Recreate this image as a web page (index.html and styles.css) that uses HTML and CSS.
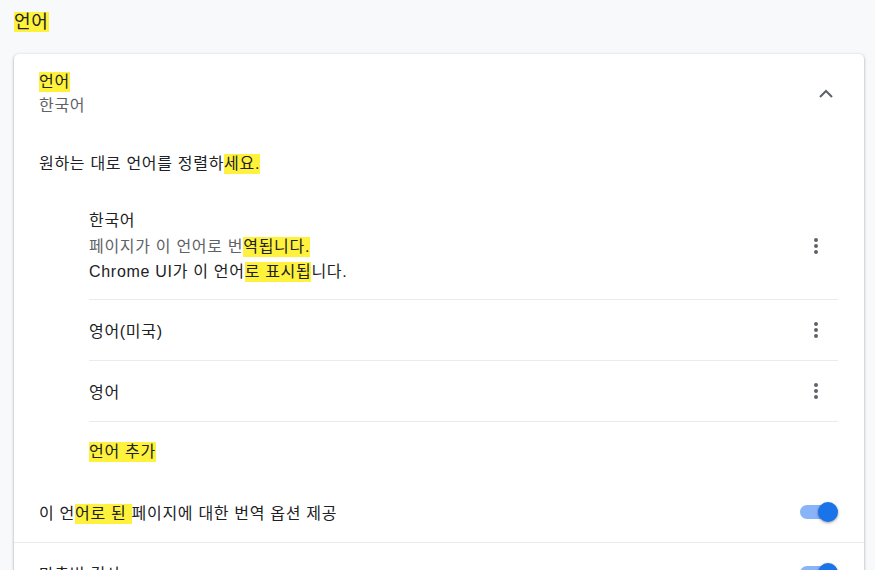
FILE: index.html
```html
<!DOCTYPE html>
<html lang="ko">
<head>
<meta charset="UTF-8">
<title>언어</title>
<link rel="stylesheet" href="styles.css">
</head>
<body>
<div class="page">
    <h2 class="page-title"><mark>언어</mark></h2>
    <div class="card">
        <div class="card-head">
            <div class="head-text">
                <div class="head-label"><mark>언어</mark></div>
                <div class="head-sub">한국어</div>
            </div>
            <svg class="chevron" width="24" height="24" viewBox="0 0 24 24"><path d="M6 15l6-6 6 6" fill="none" stroke="#5f6368" stroke-width="2"/></svg>
        </div>
        <div class="card-desc">원하는 대로 언어를 정렬하<mark>세요.</mark></div>
        <div class="lang-list">
            <div class="lang-row first">
                <div class="lang-text">
                    <div>한국어</div>
                    <div class="sub">페이지가 이 언어로 번<mark>역됩니다.</mark></div>
                    <div>Chrome UI가 이 언어<mark>로 표시됩</mark>니다.</div>
                </div>
                <svg class="kebab" width="20" height="20" viewBox="0 0 20 20"><circle cx="10" cy="4" r="2"/><circle cx="10" cy="10" r="2"/><circle cx="10" cy="16" r="2"/></svg>
            </div>
            <div class="lang-row">
                <div class="lang-text">영어(미국)</div>
                <svg class="kebab" width="20" height="20" viewBox="0 0 20 20"><circle cx="10" cy="4" r="2"/><circle cx="10" cy="10" r="2"/><circle cx="10" cy="16" r="2"/></svg>
            </div>
            <div class="lang-row">
                <div class="lang-text">영어</div>
                <svg class="kebab" width="20" height="20" viewBox="0 0 20 20"><circle cx="10" cy="4" r="2"/><circle cx="10" cy="10" r="2"/><circle cx="10" cy="16" r="2"/></svg>
            </div>
            <div class="lang-row add">
                <div class="lang-text"><mark>언어 추가</mark></div>
            </div>
        </div>
        <div class="toggle-row">
            <div>이 언<mark>어로 된&nbsp;</mark>페이지에 대한 번역 옵션 제공</div>
            <span class="toggle"><span class="knob"></span></span>
        </div>
        <div class="toggle-row border">
            <div>맞춤법 검사</div>
            <span class="toggle"><span class="knob"></span></span>
        </div>
    </div>
</div>
</body>
</html>
```

FILE: styles.css
```css
body {
    margin: 0;
    background: #f8f9fa;
    font-family: "Liberation Sans", "Noto Sans CJK KR", sans-serif;
    font-size: 16px;
    letter-spacing: 0.7px;
    color: #202124;
    overflow: hidden;
}
.page {
    padding: 0 11px 0 14px;
}
mark {
    background: #fff23c;
    color: #202124;
    display: inline-block;
    line-height: 20px;
    white-space: pre;
}
.page-title {
    margin: 0;
    padding: 10px 0 20px 0;
    font-size: 18px;
    font-weight: normal;
    line-height: 24px;
}
.card {
    background: #fff;
    border-radius: 5px;
    box-shadow: 0 1px 2px rgba(60,64,67,0.3), 0 1px 3px 1px rgba(60,64,67,0.15);
    height: 600px;
}
.card-head {
    display: flex;
    align-items: center;
    height: 80px;
    padding: 0 26px 0 25px;
}
.head-text {
    flex: 1;
    line-height: 24px;
}
.head-sub { color: #5f6368; }
.card-desc {
    height: 60px;
    line-height: 60px;
    padding: 0 25px;
}
.lang-list {
    padding: 0 26px 0 75px;
}
.lang-row {
    display: flex;
    align-items: center;
    min-height: 60px;
    border-top: 1px solid #e8eaed;
}
.lang-row.first {
    border-top: none;
    padding: 14px 0 14px 0;
    line-height: 25.5px;
}
.lang-text { flex: 1; }
.lang-text .sub { color: #5f6368; }
.kebab {
    fill: #5f6368;
    margin-right: 12px;
}
.toggle-row {
    display: flex;
    align-items: center;
    height: 60px;
    padding: 0 26px 0 25px;
}
.toggle-row.border { border-top: 1px solid #e8eaed; }
.toggle-row div { flex: 1; }
.toggle {
    position: relative;
    width: 36px;
    height: 14px;
    border-radius: 7px;
    background: #8ab4f8;
    margin-right: 2px;
}
.knob {
    position: absolute;
    right: -2px;
    top: -3px;
    width: 20px;
    height: 20px;
    border-radius: 50%;
    background: #1a73e8;
    box-shadow: 0 1px 3px rgba(0,0,0,0.4);
}
```
